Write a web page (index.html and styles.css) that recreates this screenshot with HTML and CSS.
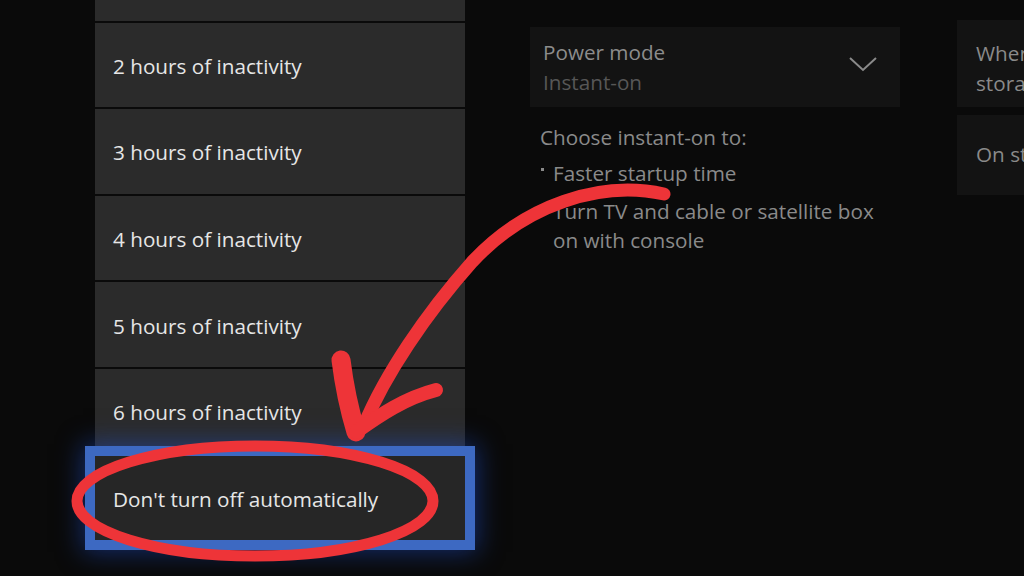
FILE: index.html
```html
<!DOCTYPE html>
<html>
<head>
<meta charset="utf-8">
<link rel="stylesheet" href="styles.css">
</head>
<body>
<div class="screen">
  <div class="left-gutter"></div>
  <div class="menu">
    <div class="item"></div>
    <div class="item"><span>2 hours of inactivity</span></div>
    <div class="item"><span>3 hours of inactivity</span></div>
    <div class="item"><span>4 hours of inactivity</span></div>
    <div class="item"><span>5 hours of inactivity</span></div>
    <div class="item"><span>6 hours of inactivity</span></div>
    <div class="item selected"><span>Don't turn off automatically</span></div>
  </div>
  <div class="main">
    <div class="dropdown">
      <div class="dd-text">
        <div class="dd-label">Power mode</div>
        <div class="dd-value">Instant-on</div>
      </div>
      <svg class="chevron" width="30" height="18" viewBox="0 0 30 18"><path d="M2 3 L15 15 L28 3" fill="none" stroke="#8a8a8a" stroke-width="2"/></svg>
    </div>
    <div class="desc">
      <div class="desc-title">Choose instant-on to:</div>
      <ul class="bullets">
        <li>Faster startup time</li>
        <li>Turn TV and cable or satellite box on with console</li>
      </ul>
    </div>
  </div>
  <div class="side">
    <div class="side-box"><div>When</div><div>stora</div></div>
    <div class="side-box short"><div>On st</div></div>
  </div>
</div>
<svg class="annot" width="1024" height="576" viewBox="0 0 1024 576">
  <g fill="none" stroke="#ee3438" stroke-linecap="round" stroke-linejoin="round">
    <path d="M664 194 C600 180 525 205 472 262 C425 315 385 375 364 425" stroke-width="13"/>
    <path d="M341 360 C345 392 350 412 356 432" stroke-width="19"/>
    <path d="M356 432 C380 415 405 398 436 390" stroke-width="14"/>
    <ellipse cx="255" cy="501" rx="178" ry="55" stroke-width="11"/>
  </g>
</svg>
</body>
</html>
```
FILE: styles.css
```css
html, body {
  margin: 0;
  padding: 0;
  background: #0a0a0a;
  overflow: hidden;
}
body {
  width: 1024px;
  height: 576px;
  position: relative;
  font-family: "Open Sans", "Noto Sans", sans-serif;
}
.screen {
  display: flex;
  width: 1024px;
  height: 576px;
  background: #0a0a0a;
  overflow: hidden;
}
.left-gutter {
  width: 95px;
  flex: none;
}
.menu {
  width: 370px;
  flex: none;
  display: flex;
  flex-direction: column;
  gap: 2px;
  margin-top: -64px;
}
.item {
  height: 84.6px;
  flex: none;
  background: #2b2b2b;
  display: flex;
  align-items: center;
  padding-left: 18px;
  color: #e6e6e6;
  font-size: 20.7px;
  box-sizing: border-box;
}
.item span { position: relative; top: 1px; }
.item.selected {
  background: #262626;
  outline: 10px solid #3d69c2;
  box-shadow: 0 0 24px 12px rgba(30, 80, 210, 0.5);
  position: relative;
}
.main {
  margin-left: 65px;
  width: 370px;
  flex: none;
  padding-top: 27px;
}
.dropdown {
  height: 80px;
  background: #131313;
  display: flex;
  align-items: center;
  justify-content: space-between;
  padding: 0 22px 0 13px;
  box-sizing: border-box;
}
.dd-label {
  color: #8c8c8c;
  font-size: 20.7px;
  line-height: 30px;
}
.dd-value {
  color: #575757;
  font-size: 20.7px;
  line-height: 30px;
}
.chevron { margin-top: -6px; }
.desc {
  padding-left: 10px;
  padding-top: 15px;
  color: #8a8a8a;
  font-size: 20.7px;
}
.desc-title { line-height: 30px; }
.bullets {
  list-style: none;
  margin: 7px 0 0 0;
  padding: 0;
  width: 350px;
}
.bullets li {
  position: relative;
  padding-left: 13px;
  line-height: 29px;
  margin-bottom: 9px;
}
.bullets li::before {
  content: "";
  position: absolute;
  left: 1px;
  top: 9px;
  width: 3px;
  height: 3px;
  background: #8a8a8a;
}
.side {
  margin-left: 57px;
  flex: none;
  width: 67px;
  padding-top: 20px;
  display: flex;
  flex-direction: column;
  gap: 8px;
}
.side-box {
  height: 87px;
  background: #131313;
  padding: 18px 0 0 19px;
  box-sizing: border-box;
  color: #8a8a8a;
  font-size: 20.7px;
  line-height: 30px;
  white-space: nowrap;
  overflow: hidden;
}
.side-box.short {
  height: 80px;
  padding-top: 24px;
}
.annot {
  position: absolute;
  left: 0;
  top: 0;
  pointer-events: none;
}
```
